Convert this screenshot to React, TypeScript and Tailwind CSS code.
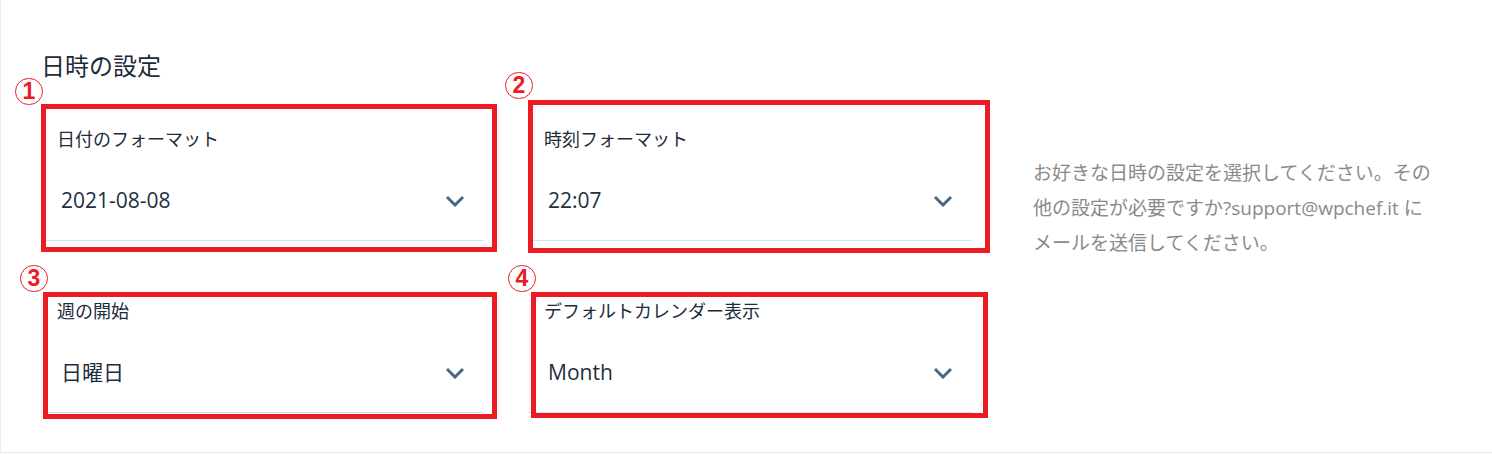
import { ReactNode } from 'react';

type Mark = {
  num: string;
  box: string;
  badge: string;
};

type Field = {
  label: string;
  value: string;
  mark: Mark;
};

const fields: Field[] = [
  {
    label: '日付のフォーマット',
    value: '2021-08-08',
    mark: { num: '1', box: 'left-0 -top-[22px] w-[456px] h-[148px]', badge: '-left-[26px] -top-[48px]' },
  },
  {
    label: '時刻フォーマット',
    value: '22:07',
    mark: { num: '2', box: 'left-0 -top-[26px] w-[462px] h-[153px]', badge: '-left-[23px] -top-[54px]' },
  },
  {
    label: '週の開始',
    value: '日曜日',
    mark: { num: '3', box: 'left-[2px] -top-[6px] w-[454px] h-[127px]', badge: '-left-[21px] -top-[33px]' },
  },
  {
    label: 'デフォルトカレンダー表示',
    value: 'Month',
    mark: { num: '4', box: 'left-[3px] -top-[6px] w-[457px] h-[126px]', badge: '-left-[20px] -top-[33px]' },
  },
];

function Chevron() {
  return (
    <svg width="20" height="12" viewBox="0 0 20 12" fill="none">
      <path d="M2 2 L10 10 L18 2" stroke="#4b6882" strokeWidth="3" />
    </svg>
  );
}

function Badge({ num, className }: { num: string; className: string }) {
  return (
    <span
      className={`absolute ${className} flex h-[27px] w-[28px] items-center justify-center rounded-full border-[1.5px] border-[#ec1c24] font-['Liberation_Sans',sans-serif] text-[23px] font-bold leading-none text-[#ec1c24]`}
    >
      {num}
    </span>
  );
}

function SelectField({ field }: { field: Field }): ReactNode {
  return (
    <div className="relative">
      <div className="h-[27px] pl-4 text-[18px] leading-[27px] text-[#1d2b3a]">{field.label}</div>
      <div className="flex h-[88px] items-center justify-between border-b border-[#cfe2f1] pl-5 pr-[19px] pt-2">
        <span className="text-[21px] text-[#1f2f3f]">{field.value}</span>
        <Chevron />
      </div>

      {/* annotation overlay */}
      <div className={`pointer-events-none absolute ${field.mark.box} border-[5px] border-[#ec1c24]`} />
      <Badge num={field.mark.num} className={field.mark.badge} />
    </div>
  );
}

export default function App() {
  return (
    <div
      className="h-[454px] w-[1492px] bg-white"
      style={{ fontFamily: '"Open Sans", "Noto Sans CJK JP", sans-serif' }}
    >
      <div className="h-[453px] border-b border-l border-[#ececec] pl-[40px] pt-[50px]">
        <h2 className="h-[32px] text-[24px] leading-[32px] text-[#1d2b3a]">日時の設定</h2>

        <div className="mt-[44px] flex">
          <div className="grid grid-cols-[443px_444px] gap-x-[44px] gap-y-[57px]">
            {fields.map((f) => (
              <SelectField key={f.label} field={f} />
            ))}
          </div>

          <p className="ml-[61px] pt-[30px] text-[19px] leading-[35px] text-[#8a8a8a]">
            お好きな日時の設定を選択してください。その
            <br />
            他の設定が必要ですか?support@wpchef.it に
            <br />
            メールを送信してください。
          </p>
        </div>
      </div>
    </div>
  );
}
